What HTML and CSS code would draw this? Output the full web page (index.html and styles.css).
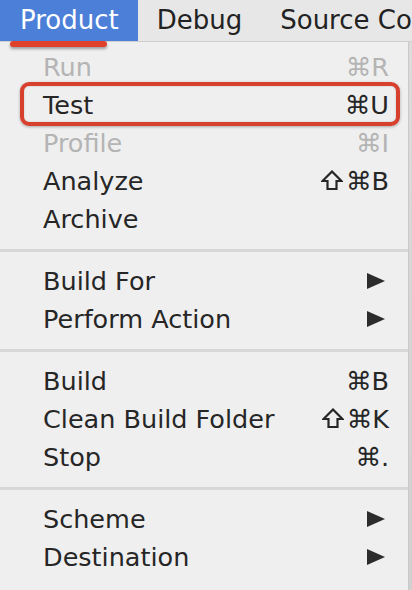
FILE: index.html
```html
<!DOCTYPE html>
<html>
<head>
<meta charset="utf-8">
<link rel="stylesheet" href="styles.css">
</head>
<body>
<div class="screen">
  <div class="menubar">
    <div class="mb-item active">Product<span class="underline"></span></div>
    <div class="mb-item">Debug</div>
    <div class="mb-item">Source Co</div>
  </div>
  <div class="content">
    <div class="menu">
      <div class="row disabled"><span>Run</span><span class="key">⌘R</span></div>
      <div class="row highlight"><span>Test</span><span class="key">⌘U</span></div>
      <div class="row disabled"><span>Profile</span><span class="key">⌘I</span></div>
      <div class="row"><span>Analyze</span><span class="key"><svg class="shift" viewBox="0 0 22 20"><polygon points="11,1.5 20.5,11 15.5,11 15.5,19 6.5,19 6.5,11 1.5,11"/></svg>⌘B</span></div>
      <div class="row"><span>Archive</span></div>
      <div class="sep"></div>
      <div class="row"><span>Build For</span><svg class="arrow" viewBox="0 0 18 16"><polygon points="0,0 18,8 0,16"/></svg></div>
      <div class="row"><span>Perform Action</span><svg class="arrow" viewBox="0 0 18 16"><polygon points="0,0 18,8 0,16"/></svg></div>
      <div class="sep"></div>
      <div class="row"><span>Build</span><span class="key">⌘B</span></div>
      <div class="row"><span>Clean Build Folder</span><span class="key"><svg class="shift" viewBox="0 0 22 20"><polygon points="11,1.5 20.5,11 15.5,11 15.5,19 6.5,19 6.5,11 1.5,11"/></svg>⌘K</span></div>
      <div class="row"><span>Stop</span><span class="key">⌘.</span></div>
      <div class="sep"></div>
      <div class="row"><span>Scheme</span><svg class="arrow" viewBox="0 0 18 16"><polygon points="0,0 18,8 0,16"/></svg></div>
      <div class="row"><span>Destination</span><svg class="arrow" viewBox="0 0 18 16"><polygon points="0,0 18,8 0,16"/></svg></div>
    </div>
    <div class="side"></div>
  </div>
</div>
</body>
</html>
```

FILE: styles.css
```css
html, body {
  margin: 0;
  padding: 0;
  background: #efefef;
}
.screen {
  width: 412px;
  height: 590px;
  overflow: hidden;
  font-family: "DejaVu Sans", "Liberation Sans", sans-serif;
  color: #262626;
}
.menubar {
  display: flex;
  height: 42px;
  background: #e7e7e7;
  border-bottom: 1px solid #cfcfcf;
  box-sizing: border-box;
  align-items: stretch;
  font-size: 26px;
  position: relative;
}
.mb-item {
  display: flex;
  align-items: center;
  padding: 0 19px 2px 19px;
  color: #222;
  position: relative;
  white-space: nowrap;
}
.mb-item.active {
  background: #4c7fd8;
  color: #fff;
  width: 140px;
  box-sizing: border-box;
  padding-left: 20px;
}
.underline {
  position: absolute;
  left: 10px;
  top: 41px;
  width: 97px;
  height: 6px;
  border-radius: 3px;
  background: #e0412b;
  box-shadow: 0 2px 3px rgba(0,0,0,0.35);
  z-index: 2;
}
.mb-item:nth-child(2) { padding-left: 19px; padding-right: 19px; }
.content {
  display: flex;
  height: 548px;
}
.menu {
  width: 409px;
  background: #efefef;
  border-right: 1px solid #c9c9c9;
  box-sizing: border-box;
  padding-top: 6px;
  font-size: 25.5px;
}
.side {
  flex: 1;
  background: linear-gradient(#dcdcdc 0, #d0d0d0 100%);
}
.row {
  height: 38px;
  display: flex;
  align-items: center;
  justify-content: space-between;
  padding: 0 19px 0 43px;
  position: relative;
}
.row.disabled { color: #b4b4b4; }
.key {
  display: flex;
  align-items: center;
  gap: 3px;
}
.shift {
  width: 22px;
  height: 20px;
  fill: none;
  stroke: #262626;
  stroke-width: 2.2;
  stroke-linejoin: miter;
  margin-top: -2px;
}
.highlight::after {
  content: "";
  position: absolute;
  left: 20px;
  right: 8px;
  top: -4px;
  bottom: -2px;
  border: 4px solid #d6402c;
  border-radius: 9px;
  box-shadow: 0 1px 3px rgba(0,0,0,0.3), inset 0 0 2px rgba(0,0,0,0.2);
}
.arrow {
  width: 18px;
  height: 16px;
  fill: #2c2c2c;
  margin-right: 4px;
}
.sep {
  height: 24px;
  display: flex;
  align-items: center;
}
.sep::before {
  content: "";
  display: block;
  width: 100%;
  height: 3px;
  background: #d7d7d7;
}
```
